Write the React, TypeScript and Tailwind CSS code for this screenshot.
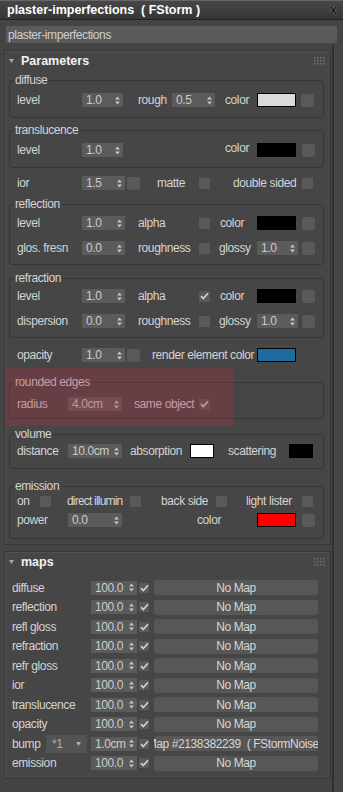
import type { ReactNode } from 'react'

function Arrows() {
  return (
    <svg width="5" height="9" viewBox="0 0 5 9" className="shrink-0">
      <path d="M2.5 0.5L5 3.5H0z M0 5.5h5L2.5 8.5z" fill="#c6c6c6" />
    </svg>
  )
}

function Spin({ v, className }: { v: string; className: string }) {
  return (
    <div
      className={`flex h-[14px] shrink-0 items-center justify-between bg-[#5b5b5b] pl-[4px] pr-[3px] text-[#cbcbcb] ${className}`}
    >
      <span className="whitespace-nowrap">{v}</span>
      <Arrows />
    </div>
  )
}

function Check({ on = false, className = 'h-[11px] w-[11px]' }: { on?: boolean; className?: string }) {
  return (
    <div className={`flex shrink-0 items-center justify-center bg-[#595959] ${className}`}>
      {on && (
        <svg width="9" height="8" viewBox="0 0 9 8">
          <path d="M1 4.2L3.3 6.6L8 1.2" stroke="#d0d0d0" strokeWidth="1.7" fill="none" />
        </svg>
      )}
    </div>
  )
}

function Swatch({ className }: { className: string }) {
  return <div className={`h-[14px] shrink-0 border border-black ${className}`} />
}

function MapBtn({ className }: { className: string }) {
  return <div className={`h-[13px] w-[13px] shrink-0 rounded-[2px] bg-[#595959] ${className}`} />
}

function L({ className, children }: { className: string; children: ReactNode }) {
  return <span className={`shrink-0 whitespace-nowrap ${className}`}>{children}</span>
}

function Row({ className, children }: { className: string; children: ReactNode }) {
  return <div className={`flex h-[16px] items-center ${className}`}>{children}</div>
}

function Group({ title, className, children }: { title: string; className: string; children: ReactNode }) {
  return (
    <fieldset className={`ml-[4px] mr-[6px] rounded-[3px] border border-[#363636] ${className}`}>
      <legend className="ml-[4px] px-[1px] leading-[14px]">{title}</legend>
      {children}
    </fieldset>
  )
}

function Grip() {
  const dots = []
  for (let r = 0; r < 3; r++) {
    for (let c = 0; c < 4; c++) {
      dots.push(<rect key={`${r}-${c}`} x={c * 3} y={r * 3} width="1.5" height="1.5" fill="#707070" />)
    }
  }
  return (
    <svg width="11" height="8" viewBox="0 0 11 8" className="ml-auto">
      {dots}
    </svg>
  )
}

function Rollout({ title, className, children }: { title: string; className: string; children: ReactNode }) {
  return (
    <div className={`ml-[4px] w-[327px] border border-[#363636] bg-[#464646] shadow-[inset_1px_1px_0_#525252] ${className}`}>
      <div className="flex h-[20px] items-center pl-[4px] pr-[5px]">
        <svg width="5" height="4" viewBox="0 0 5 4">
          <path d="M0 0H5L2.5 4z" fill="#a6a6a6" />
        </svg>
        <span className="ml-[7px] text-[12.5px] font-bold tracking-normal text-[#f2f2f2]">{title}</span>
        <Grip />
      </div>
      {children}
    </div>
  )
}

function MapRow({ label, value = '100.0', text = 'No Map', extra }: { label: string; value?: string; text?: string; extra?: ReactNode }) {
  return (
    <div className="flex h-[19.5px] items-center pl-[7px]">
      {extra ? extra : <L className="w-[79px]">{label}</L>}
      <Spin v={value} className="w-[46px]" />
      <Check on className="ml-[2px] h-[10px] w-[10px]" />
      <div className="ml-[5px] flex h-[15px] w-[164px] shrink-0 items-center justify-center overflow-hidden rounded-[3px] bg-[#575757] text-[#d6d6d6]">
        <span className="shrink-0 whitespace-pre">{text}</span>
      </div>
    </div>
  )
}

export default function App() {
  const maps = ['diffuse', 'reflection', 'refl gloss', 'refraction', 'refr gloss', 'ior', 'translucence', 'opacity']

  return (
    <div className="flex h-[792px] w-[343px] flex-col overflow-hidden bg-[#444444] font-['Liberation_Sans',Arial,sans-serif] text-[12px] leading-[14px] tracking-[-0.4px] text-[#d4d4d4]">
      {/* title bar */}
      <div className="flex h-[20px] shrink-0 items-center border-t border-b border-t-[#666666] border-b-[#222222] bg-linear-to-b from-[#474747] to-[#363636] pl-[7px] pr-[6px]">
        <span className="whitespace-pre text-[12.5px] font-bold tracking-normal text-white">plaster-imperfections  ( FStorm )</span>
        <span className="ml-auto text-[13px] font-bold tracking-normal text-[#111111] [text-shadow:0_0_1px_#cfcfcf]">x</span>
      </div>

      {/* name field */}
      <div className="mx-[6px] mt-[6px] flex h-[17px] shrink-0 items-center bg-[#5a5a5a] pl-[2px] text-[#cfcfcf]">
        plaster-imperfections
      </div>

      <div className="flex flex-1">
        <div className="w-[332px] shrink-0 pt-[7px]">
          <Rollout title="Parameters" className="pb-[5px]">
            <Group title="diffuse" className="mt-[2px] pb-[9px]">
              <Row className="mt-[5px] pl-[7px]">
                <L className="w-[65px]">level</L>
                <Spin v="1.0" className="w-[41px]" />
                <L className="ml-[15px] w-[34px]">rough</L>
                <Spin v="0.5" className="w-[43px]" />
                <L className="ml-[10px] w-[32px]">color</L>
                <Swatch className="w-[39px] bg-[#d9d9d9]" />
                <MapBtn className="ml-[5px]" />
              </Row>
            </Group>

            <Group title="translucence" className="mt-[5px] pb-[9px]">
              <Row className="mt-[5px] pl-[7px]">
                <L className="w-[65px]">level</L>
                <Spin v="1.0" className="w-[41px]" />
                <L className="ml-[102px] w-[32px] -translate-y-[2px]">color</L>
                <Swatch className="w-[39px] bg-black" />
                <MapBtn className="ml-[6px]" />
              </Row>
            </Group>

            <Row className="mt-[7px] pl-[12px]">
              <L className="w-[65px]">ior</L>
              <Spin v="1.5" className="w-[43px]" />
              <MapBtn className="ml-[2px]" />
              <L className="ml-[17px] w-[42px]">matte</L>
              <Check />
              <L className="ml-[23px] w-[69px]">double sided</L>
              <Check />
            </Row>

            <Group title="reflection" className="mt-[6px] pb-[8px]">
              <Row className="mt-[4px] pl-[7px]">
                <L className="w-[65px]">level</L>
                <Spin v="1.0" className="w-[43px]" />
                <L className="ml-[13px] w-[61px]">alpha</L>
                <Check />
                <L className="ml-[10px] w-[37px]">color</L>
                <Swatch className="w-[39px] bg-black" />
                <MapBtn className="ml-[6px]" />
              </Row>
              <Row className="mt-[9px] pl-[7px]">
                <L className="w-[65px]">glos. fresn</L>
                <Spin v="0.0" className="w-[43px]" />
                <L className="ml-[13px] w-[61px]">roughness</L>
                <Check />
                <L className="ml-[9px] w-[38px]">glossy</L>
                <Spin v="1.0" className="w-[41px]" />
                <MapBtn className="ml-[4px]" />
              </Row>
            </Group>

            <Group title="refraction" className="mt-[6px] pb-[8px]">
              <Row className="mt-[3px] pl-[7px]">
                <L className="w-[65px]">level</L>
                <Spin v="1.0" className="w-[43px]" />
                <L className="ml-[13px] w-[61px]">alpha</L>
                <Check on />
                <L className="ml-[10px] w-[37px]">color</L>
                <Swatch className="w-[39px] bg-black" />
                <MapBtn className="ml-[6px]" />
              </Row>
              <Row className="mt-[9px] pl-[7px]">
                <L className="w-[65px]">dispersion</L>
                <Spin v="0.0" className="w-[43px]" />
                <L className="ml-[13px] w-[61px]">roughness</L>
                <Check />
                <L className="ml-[9px] w-[38px]">glossy</L>
                <Spin v="1.0" className="w-[41px]" />
                <MapBtn className="ml-[4px]" />
              </Row>
            </Group>

            <Row className="mt-[9px] pl-[12px]">
              <L className="w-[65px]">opacity</L>
              <Spin v="1.0" className="w-[43px]" />
              <MapBtn className="ml-[2px]" />
              <L className="ml-[12px] w-[105px]">render element color</L>
              <Swatch className="w-[39px] bg-[#1f6a9f]" />
            </Row>

            <div className="relative mt-[12px]">
              <Group title="rounded edges" className="pb-[6px]">
                <Row className="mt-[7px] pl-[7px]">
                  <L className="w-[51px]">radius</L>
                  <Spin v="4.0cm" className="w-[54px]" />
                  <L className="ml-[12px] w-[65px]">same object</L>
                  <Check on />
                </Row>
              </Group>
              <div className="pointer-events-none absolute left-0 top-[-7px] h-[58px] w-[228px] bg-[rgba(170,45,65,0.33)]" />
            </div>

            <Group title="volume" className="mt-[8px] pb-[9px]">
              <Row className="mt-[2px] pl-[7px]">
                <L className="w-[51px]">distance</L>
                <Spin v="10.0cm" className="w-[54px]" />
                <L className="ml-[8px] w-[60px]">absorption</L>
                <Swatch className="w-[24px] bg-white" />
                <L className="ml-[14px] w-[61px]">scattering</L>
                <Swatch className="w-[24px] bg-black" />
              </Row>
            </Group>

            <Group title="emission" className="mt-[10px] pb-[10px]">
              <Row className="pl-[7px]">
                <L className="w-[23px]">on</L>
                <Check />
                <L className="ml-[16px] w-[63px] tracking-[-0.8px]">direct illumin</L>
                <Check />
                <L className="ml-[20px] w-[55px]">back side</L>
                <Check />
                <L className="ml-[19px] w-[56px]">light lister</L>
                <Check />
              </Row>
              <Row className="mt-[3px] pl-[7px]">
                <L className="w-[51px]">power</L>
                <Spin v="0.0" className="w-[54px]" />
                <L className="ml-[75px] w-[60px]">color</L>
                <Swatch className="w-[39px] bg-[#ff0000]" />
                <MapBtn className="ml-[6px]" />
              </Row>
            </Group>
          </Rollout>

          <Rollout title="maps" className="mt-[6px] pb-[5px]">
            <div className="pt-[6px]">
              {maps.map((m) => (
                <MapRow key={m} label={m} />
              ))}
              <MapRow
                label="bump"
                value="1.0cm"
                text="Map #2138382239  ( FStormNoise )"
                extra={
                  <>
                    <L className="w-[34px]">bump</L>
                    <div className="flex h-[18px] w-[41px] shrink-0 items-center bg-[#535353] pl-[6px] pr-[6px] text-[#b0b0b0]">
                      <span>*1</span>
                      <svg width="5" height="4" viewBox="0 0 5 4" className="ml-auto">
                        <path d="M0 0H5L2.5 4z" fill="#b0b0b0" />
                      </svg>
                    </div>
                    <div className="w-[4px] shrink-0" />
                  </>
                }
              />
              <MapRow label="emission" />
            </div>
          </Rollout>
        </div>
        <div className="mt-[2px] flex-1 border-l-2 border-[#303030] bg-[#464646]" />
      </div>
    </div>
  )
}
